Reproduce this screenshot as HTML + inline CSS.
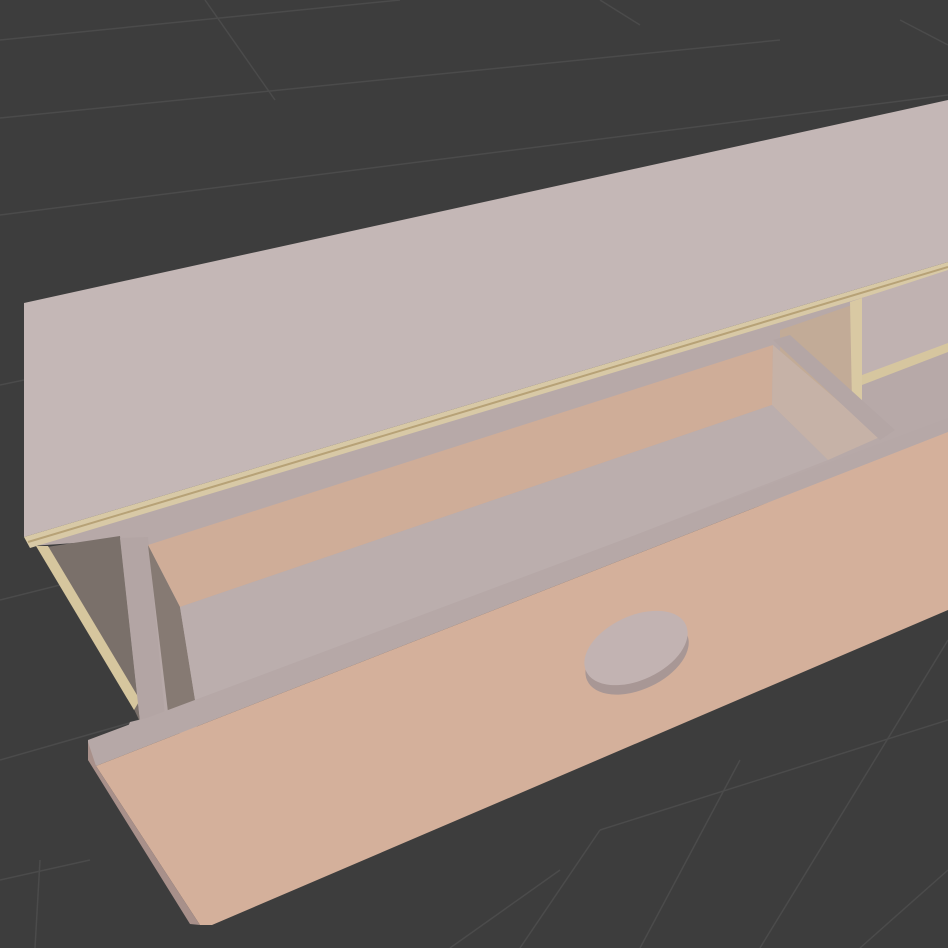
<!DOCTYPE html>
<html><head><meta charset="utf-8"><style>
html,body{margin:0;padding:0;background:#3d3d3d;}
svg{display:block;}
</style></head><body>
<svg width="948" height="948" viewBox="0 0 948 948" xmlns="http://www.w3.org/2000/svg">
<rect width="948" height="948" fill="#3d3d3d"/>
<g stroke="#4b4b4b" stroke-width="1.5" fill="none">
<line x1="0" y1="40" x2="400" y2="0"/>
<line x1="0" y1="118" x2="780" y2="40"/>
<line x1="0" y1="215" x2="948" y2="95"/>
<line x1="205" y1="0" x2="275" y2="100"/>
<line x1="600" y1="0" x2="640" y2="25"/>
<line x1="900" y1="20" x2="948" y2="45"/>
<line x1="0" y1="385" x2="24" y2="380"/>
<line x1="0" y1="600" x2="60" y2="585"/>
<line x1="0" y1="760" x2="140" y2="720"/>
<line x1="0" y1="880" x2="90" y2="860"/>
<line x1="35" y1="948" x2="40" y2="860"/>
<line x1="520" y1="948" x2="600" y2="830"/>
<line x1="640" y1="948" x2="740" y2="760"/>
<line x1="760" y1="948" x2="948" y2="640"/>
<line x1="600" y1="830" x2="948" y2="720"/>
<line x1="860" y1="948" x2="948" y2="870"/>
<line x1="450" y1="948" x2="560" y2="870"/>
</g>
<!-- cabinet front -->
<polygon points="24,303 948,100 948,262 24,537" fill="#c4b7b6"/>
<!-- gray lower cabinet/rim base -->
<polygon points="30,546 948,270 948,440 140,722 120,540" fill="#b7a9a8"/>
<!-- gold trim -->
<polygon points="24,537 948,262 948,272 30,548" fill="#d8c9a6"/>
<line x1="28" y1="542" x2="948" y2="267" stroke="#b7a277" stroke-width="2"/>
<!-- left dark opening -->
<polygon points="40,548 120,536 140,722 132,705" fill="#7a706a"/>
<polygon points="36,546 48,546 140,700 134,710" fill="#d6c69e"/>
<!-- right recess -->
<polygon points="780,330 852,305 852,398 820,410 780,360" fill="#c2ab97"/>
<polygon points="850,302 862,298 862,400 852,402" fill="#d9c9a3"/>
<polygon points="862,298 948,270 948,345 862,375" fill="#c0b2b1"/>
<polygon points="862,375 948,343 948,352 862,385" fill="#d6c69f"/>
<!-- drawer left post -->
<polygon points="120,538 148,537 165,716 140,722" fill="#b3a5a4"/>
<!-- drawer back wall -->
<polygon points="148,545 773,345 772,405 180,607" fill="#cfad98"/>
<!-- drawer left inner side -->
<polygon points="148,545 180,607 196,706 168,712" fill="#867a73"/>
<!-- floor -->
<polygon points="180,607 772,405 828,460 196,706" fill="#bbaead"/>
<!-- right wall inner -->
<polygon points="773,345 880,437 828,460 772,405" fill="#c6b2a7"/>
<polygon points="773,340 790,335 895,430 880,440" fill="#b4a6a5"/>
<!-- front rim -->
<polygon points="88,740 948,418 948,432 96,766 88,760" fill="#b6a8a7"/>
<polygon points="130,722 200,705 196,730 120,745" fill="#b6a8a7"/>
<!-- drawer front -->
<polygon points="96,766 948,432 948,610 212,925 200,925" fill="#d4b09b"/>
<polygon points="88,742 96,766 200,925 190,924 88,760" fill="#a8908a"/>
<!-- knob -->
<g transform="translate(636,648) rotate(-25)">
<ellipse cx="-3" cy="9" rx="55" ry="32" fill="#a89795"/>
<ellipse cx="0" cy="0" rx="55" ry="32" fill="#c2b3b2"/>
</g>
</svg>
</body></html>
